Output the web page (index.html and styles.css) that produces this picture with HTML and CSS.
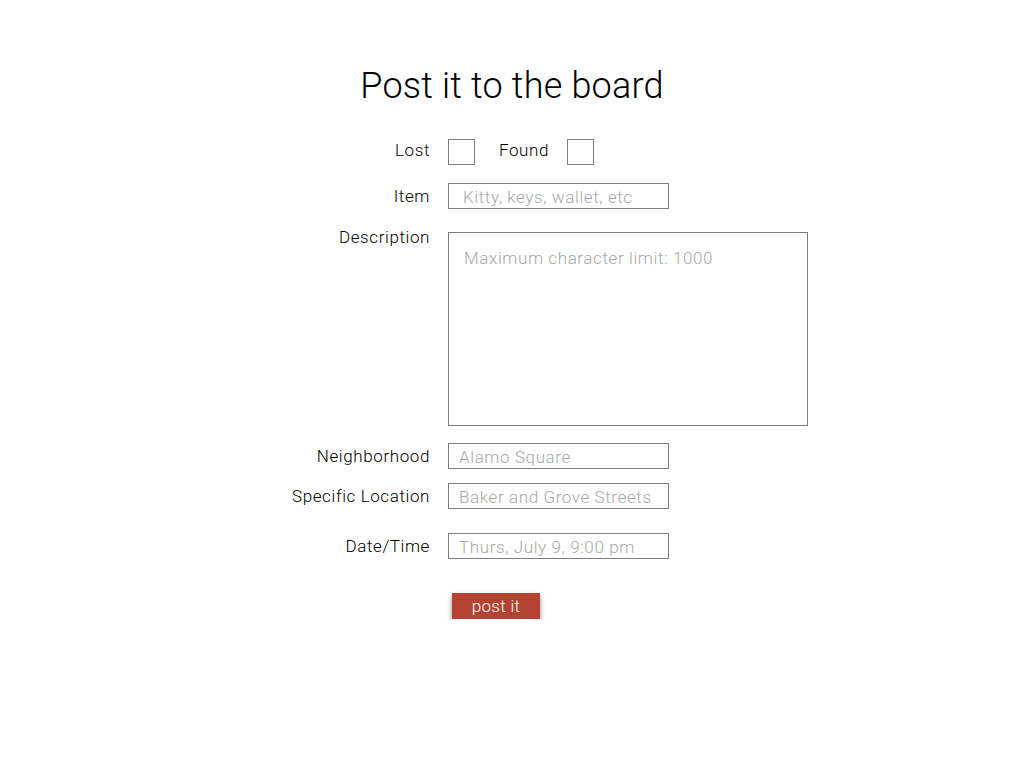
FILE: index.html
```html
<!DOCTYPE html>
<html>
<head>
<meta charset="utf-8">
<link rel="stylesheet" href="styles.css">
</head>
<body>
<main class="page">
  <h1 class="title">Post it to the board</h1>
  <form class="form">
    <label class="label label-lost">Lost</label>
    <div class="checks">
      <input type="checkbox" class="check">
      <span class="check-label">Found</span>
      <input type="checkbox" class="check">
    </div>

    <label class="label row-item">Item</label>
    <input class="field row-item" type="text" placeholder="Kitty, keys, wallet, etc">

    <label class="label label-top">Description</label>
    <textarea class="area row-desc" placeholder="Maximum character limit: 1000"></textarea>

    <label class="label row-hood">Neighborhood</label>
    <input class="field field-tight row-hood" type="text" placeholder="Alamo Square">

    <label class="label row-loc">Specific Location</label>
    <input class="field field-tight row-loc" type="text" placeholder="Baker and Grove Streets">

    <label class="label row-date">Date/Time</label>
    <input class="field field-tight row-date" type="text" placeholder="Thurs, July 9, 9:00 pm">

    <span class="row-btn"></span>
    <button type="button" class="btn row-btn">post it</button>
  </form>
</main>
</body>
</html>
```

FILE: styles.css
```css
html, body {
  margin: 0;
  padding: 0;
  background: #ffffff;
}
body {
  font-family: "Roboto", "Liberation Sans", sans-serif;
  font-weight: 300;
  color: #000;
}
.page {
  padding-top: 62px;
}
.title {
  margin: 0;
  text-align: center;
  font-size: 36px;
  font-weight: 300;
  line-height: 48px;
  letter-spacing: 0.2px;
  color: #000;
}
.form {
  display: grid;
  grid-template-columns: 430px 1fr;
  column-gap: 18px;
  align-items: center;
  margin-top: 29px;
}
.label {
  text-align: right;
  font-size: 17px;
  line-height: 20px;
  letter-spacing: 0.6px;
  color: #000;
}
.label-lost {
  margin-top: -4px;
}
.label-top {
  align-self: start;
  margin-top: 18px;
}
.checks {
  display: flex;
  align-items: center;
}
.check {
  appearance: none;
  -webkit-appearance: none;
  margin: 0;
  width: 27px;
  height: 26px;
  border: 1px solid #7d7d7d;
  box-sizing: border-box;
  background: #fff;
}
.check-label {
  font-size: 17px;
  letter-spacing: 0.6px;
  margin: -4px 18px 0 24px;
  color: #000;
}
.field, .area {
  font-family: "Roboto", "Liberation Sans", sans-serif;
  font-weight: 300;
  font-size: 17px;
  letter-spacing: 0.6px;
  box-sizing: border-box;
  border: 1px solid #7d7d7d;
  background: #fff;
  margin: 0;
  outline: none;
  color: #000;
}
.field {
  width: 221px;
  height: 26px;
  padding: 2px 0 0 14px;
}
.field-tight {
  padding-left: 10px;
}
.area {
  width: 360px;
  height: 194px;
  padding: 15px 15px;
  resize: none;
  line-height: 20px;
}
.field::placeholder, .area::placeholder {
  color: #a8a8a8;
  opacity: 1;
}
.row-item { margin-top: 18px; }
.row-desc { margin-top: 23px; }
.row-hood { margin-top: 17px; }
.row-loc { margin-top: 14px; }
.row-date { margin-top: 24px; }
.row-btn { margin-top: 34px; }
.btn {
  justify-self: start;
  margin-left: 4px;
  width: 88px;
  height: 26px;
  border: none;
  background: #b34434;
  color: #fff;
  font-family: "Roboto", "Liberation Sans", sans-serif;
  font-weight: 300;
  font-size: 17px;
  letter-spacing: 0.3px;
  padding: 0;
  box-shadow: 0 3px 5px rgba(0,0,0,0.45);
}
```
